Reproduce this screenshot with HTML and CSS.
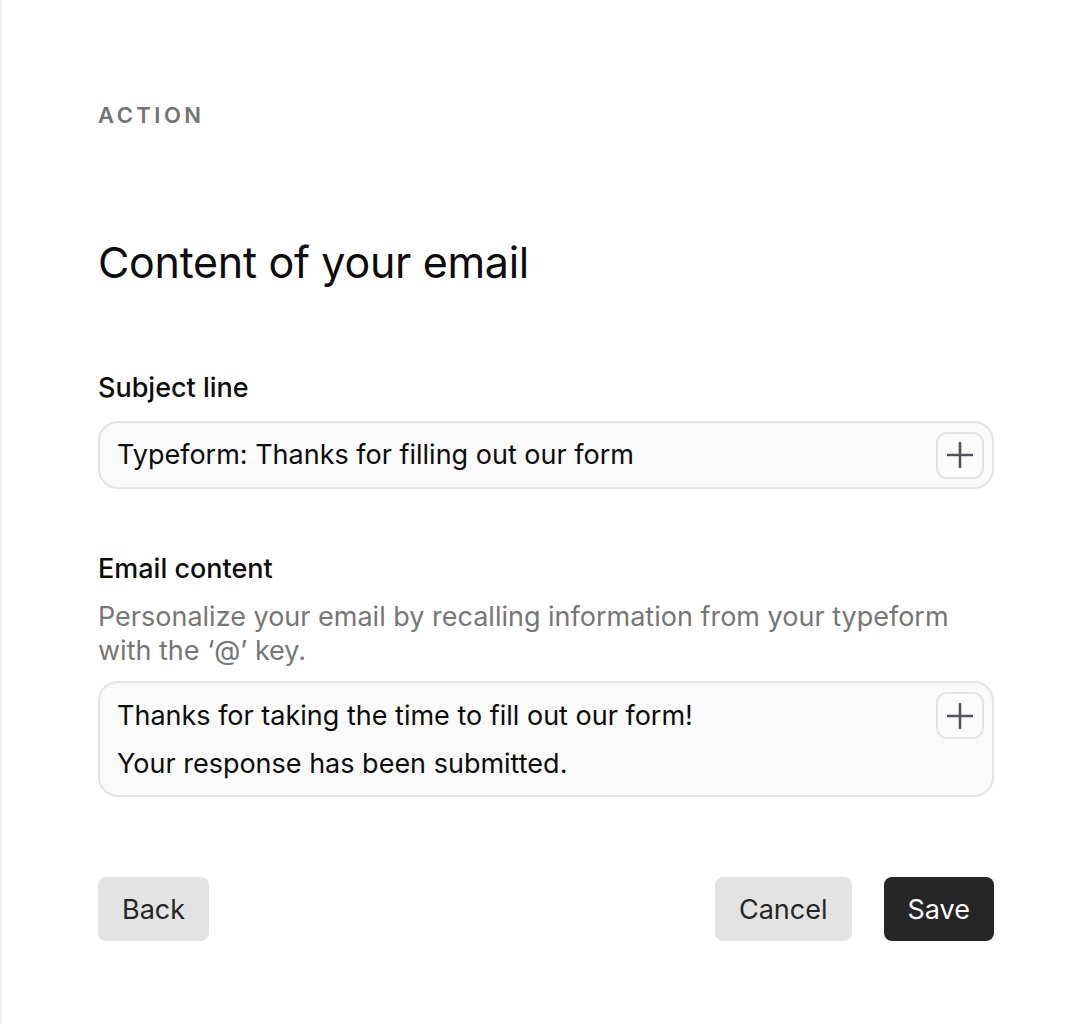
FILE: index.html
```html
<!DOCTYPE html>
<html lang="en">
<head>
<meta charset="utf-8">
<title>Content of your email</title>
<link rel="stylesheet" href="styles.css">
</head>
<body>
<main class="panel">
  <div class="eyebrow">ACTION</div>
  <h1 class="title">Content of your email</h1>

  <section class="field field-subject">
    <label class="label">Subject line</label>
    <div class="input input-single">
      <div class="input-text">Typeform: Thanks for filling out our form</div>
      <button class="add-btn" aria-label="Add">
        <svg width="26" height="26" viewBox="0 0 26 26"><path d="M13 1v24M1 13h24" stroke="#55505a" stroke-width="2.6" stroke-linecap="round" fill="none"/></svg>
      </button>
    </div>
  </section>

  <section class="field field-content">
    <label class="label">Email content</label>
    <p class="help">Personalize your email by recalling information from your typeform with the ‘@’ key.</p>
    <div class="input input-multi">
      <div class="input-text">
        <p class="para">Thanks for taking the time to fill out our form!</p>
        <p class="para">Your response has been submitted.</p>
      </div>
      <button class="add-btn" aria-label="Add">
        <svg width="26" height="26" viewBox="0 0 26 26"><path d="M13 1v24M1 13h24" stroke="#55505a" stroke-width="2.6" stroke-linecap="round" fill="none"/></svg>
      </button>
    </div>
  </section>

  <footer class="actions">
    <button class="btn btn-secondary">Back</button>
    <div class="actions-right">
      <button class="btn btn-secondary">Cancel</button>
      <button class="btn btn-primary">Save</button>
    </div>
  </footer>
</main>
</body>
</html>
```

FILE: styles.css
```css
* { box-sizing: border-box; }
html, body { margin: 0; padding: 0; background: #fff; }
body {
  font-family: Inter, "Noto Sans", "Liberation Sans", sans-serif;
  color: #0c0c0c;
}
.panel {
  min-height: 1024px;
  border-left: 2px solid #efefef;
  padding: 102px 96px 0 96px;
}
.eyebrow {
  font-size: 22px;
  font-weight: 600;
  letter-spacing: 3.5px;
  color: #737373;
  line-height: 26px;
}
.title {
  margin: 106px 0 0 0;
  font-size: 43px;
  font-weight: 400;
  line-height: 56px;
  letter-spacing: -0.3px;
  color: #0c0c0c;
}
.field-subject { margin-top: 81px; }
.field-content { margin-top: 63px; }
.label {
  display: block;
  font-size: 27px;
  font-weight: 500;
  line-height: 34px;
  color: #0c0c0c;
}
.help {
  margin: 14px 0 0 0;
  font-size: 27px;
  line-height: 34px;
  color: #767676;
  max-width: 880px;
}
.input {
  display: flex;
  align-items: flex-start;
  justify-content: space-between;
  background: #fafafa;
  border: 2px solid #e3e3e3;
  border-radius: 20px;
}
.input-single {
  margin-top: 16px;
  height: 68px;
  align-items: center;
  padding: 0 8px 0 17px;
}
.input-multi {
  margin-top: 13px;
  min-height: 114px;
  padding: 9px 8px 0 17px;
}
.input-text {
  font-size: 27px;
  line-height: 34px;
  color: #0c0c0c;
}
.input-multi .input-text { padding-top: 7px; }
.para { margin: 0 0 14px 0; }
.add-btn {
  flex: none;
  width: 48px;
  height: 47px;
  border: 2px solid #e3e3e3;
  border-radius: 11px;
  background: #fcfcfc;
  display: flex;
  align-items: center;
  justify-content: center;
  padding: 0;
}
.actions {
  margin-top: 80px;
  display: flex;
  justify-content: space-between;
  align-items: center;
}
.actions-right { display: flex; gap: 32px; }
.btn {
  height: 64px;
  border: none;
  border-radius: 8px;
  font-family: Inter, "Noto Sans", "Liberation Sans", sans-serif;
  font-size: 27px;
  font-weight: 400;
  padding: 0 24px;
}
.btn-secondary { background: #e3e3e3; color: #262626; }
.btn-primary { background: #262626; color: #fff; }
```
